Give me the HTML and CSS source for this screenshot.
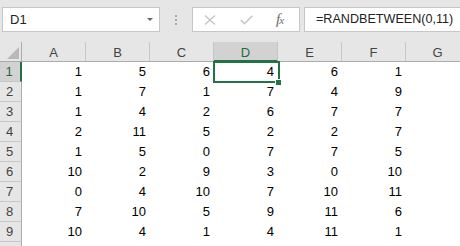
FILE: index.html
```html
<!DOCTYPE html>
<html>
<head>
<meta charset="utf-8">
<link rel="stylesheet" href="styles.css">
</head>
<body>
<div class="app">
  <div class="fbar">
    <div class="namebox"><span class="ref">D1</span><span class="arrow"></span></div>
    <div class="dots"><i></i><i></i><i></i></div>
    <div class="btns">
      <svg class="ico x" width="12" height="10" viewBox="0 0 12 10"><path d="M1 0.5 L11 9.5 M11 0.5 L1 9.5" stroke="#c3c3c3" stroke-width="1.3" fill="none"/></svg>
      <svg class="ico chk" width="13" height="10" viewBox="0 0 13 10"><path d="M0.8 5 L4.5 8.8 L12.3 0.8" stroke="#c3c3c3" stroke-width="1.4" fill="none"/></svg>
      <span class="fx">f<span class="sx">x</span></span>
    </div>
    <div class="formula">=RANDBETWEEN(0,11)</div>
  </div>
  <div class="sheet">
    <div class="corner"><span class="tri"></span></div>
    <div class="ch">A</div><div class="ch">B</div><div class="ch">C</div><div class="ch sel">D</div><div class="ch">E</div><div class="ch">F</div><div class="ch">G</div>

    <div class="rh sel">1</div><div class="c">1</div><div class="c">5</div><div class="c">6</div><div class="c active">4<span class="selbox"></span><span class="handle"></span></div><div class="c">6</div><div class="c">1</div><div class="c"></div>
    <div class="rh">2</div><div class="c">1</div><div class="c">7</div><div class="c">1</div><div class="c">7</div><div class="c">4</div><div class="c">9</div><div class="c"></div>
    <div class="rh">3</div><div class="c">1</div><div class="c">4</div><div class="c">2</div><div class="c">6</div><div class="c">7</div><div class="c">7</div><div class="c"></div>
    <div class="rh">4</div><div class="c">2</div><div class="c">11</div><div class="c">5</div><div class="c">2</div><div class="c">2</div><div class="c">7</div><div class="c"></div>
    <div class="rh">5</div><div class="c">1</div><div class="c">5</div><div class="c">0</div><div class="c">7</div><div class="c">7</div><div class="c">5</div><div class="c"></div>
    <div class="rh">6</div><div class="c">10</div><div class="c">2</div><div class="c">9</div><div class="c">3</div><div class="c">0</div><div class="c">10</div><div class="c"></div>
    <div class="rh">7</div><div class="c">0</div><div class="c">4</div><div class="c">10</div><div class="c">7</div><div class="c">10</div><div class="c">11</div><div class="c"></div>
    <div class="rh">8</div><div class="c">7</div><div class="c">10</div><div class="c">5</div><div class="c">9</div><div class="c">11</div><div class="c">6</div><div class="c"></div>
    <div class="rh">9</div><div class="c">10</div><div class="c">4</div><div class="c">1</div><div class="c">4</div><div class="c">11</div><div class="c">1</div><div class="c"></div>
    <div class="rh"></div><div class="c"></div><div class="c"></div><div class="c"></div><div class="c"></div><div class="c"></div><div class="c"></div><div class="c"></div>
  </div>
</div>
</body>
</html>
```
FILE: styles.css
```css
html, body {
  margin: 0;
  padding: 0;
}
body {
  background: #e6e6e6;
  font-family: "Liberation Sans", Arial, sans-serif;
}
.app {
  width: 460px;
  height: 246px;
  overflow: hidden;
  background: #e6e6e6;
}
.fbar {
  display: flex;
  height: 25px;
  padding-top: 7px;
  margin-bottom: 10px;
}
.namebox {
  box-sizing: border-box;
  margin-left: 2px;
  width: 158px;
  height: 25px;
  background: #fff;
  border: 1px solid #c6c6c6;
  display: flex;
  align-items: center;
  justify-content: space-between;
  padding: 0 6px 0 7px;
}
.ref {
  font-size: 13px;
  color: #222;
}
.arrow {
  width: 0;
  height: 0;
  border-left: 3px solid transparent;
  border-right: 3px solid transparent;
  border-top: 3px solid #666;
}
.dots {
  width: 32px;
  display: flex;
  flex-direction: column;
  align-items: center;
  justify-content: center;
  gap: 2px;
}
.dots i {
  display: block;
  width: 2px;
  height: 2px;
  background: #a6a6a6;
}
.btns {
  box-sizing: border-box;
  width: 108px;
  height: 25px;
  background: #fff;
  border: 1px solid #c6c6c6;
  display: flex;
  align-items: center;
  padding-left: 11px;
}
.ico.x { margin-right: 24px; margin-top: 1px; }
.ico.chk { margin-right: 23px; margin-top: 1px; }
.fx {
  font-family: "Liberation Serif", serif;
  font-style: italic;
  font-size: 15px;
  color: #6a6a6a;
  letter-spacing: -1px;
}
.sx {
  font-size: 11px;
}
.formula {
  box-sizing: border-box;
  margin-left: 4px;
  flex: 1;
  height: 25px;
  background: #fff;
  border: 1px solid #c6c6c6;
  border-right: none;
  padding-left: 11px;
  font-size: 12.6px;
  line-height: 23px;
  color: #222;
}
.sheet {
  display: grid;
  grid-template-columns: 22px repeat(7, 64px);
  grid-template-rows: 20px repeat(10, 20px);
  background: #fff;
}
.corner {
  background: #e6e6e6;
  border-bottom: 1px solid #ababab;
  border-right: 1px solid #ababab;
  position: relative;
}
.tri {
  position: absolute;
  right: 2px;
  bottom: 2px;
  width: 0;
  height: 0;
  border-left: 12px solid transparent;
  border-bottom: 12px solid #b9b9b9;
}
.ch {
  background: #e6e6e6;
  border-bottom: 1px solid #ababab;
  border-right: 1px solid #c6c6c6;
  font-size: 13px;
  color: #444;
  display: flex;
  align-items: center;
  justify-content: center;
  box-sizing: border-box;
  padding-top: 1px;
}
.ch.sel {
  background: #d2d2d2;
  color: #1e6b41;
  border-bottom: 2px solid #217346;
  padding-top: 2px;
}
.rh {
  background: #e6e6e6;
  border-right: 1px solid #ababab;
  border-bottom: 1px solid #c6c6c6;
  font-size: 13px;
  color: #444;
  display: flex;
  align-items: center;
  justify-content: center;
  box-sizing: border-box;
  padding-right: 2px;
}
.rh.sel {
  background: #d2d2d2;
  color: #1e6b41;
  border-right: 2px solid #217346;
}
.c {
  font-size: 13px;
  color: #000;
  text-align: right;
  padding-right: 4px;
  line-height: 20px;
  box-sizing: border-box;
}
.active {
  position: relative;
}
.selbox {
  position: absolute;
  left: -1px;
  top: -1px;
  right: -2px;
  bottom: -1px;
  border: 2px solid #217346;
}
.handle {
  position: absolute;
  right: -4px;
  bottom: -4px;
  width: 5px;
  height: 5px;
  background: #217346;
  border: 1px solid #fff;
}
```
